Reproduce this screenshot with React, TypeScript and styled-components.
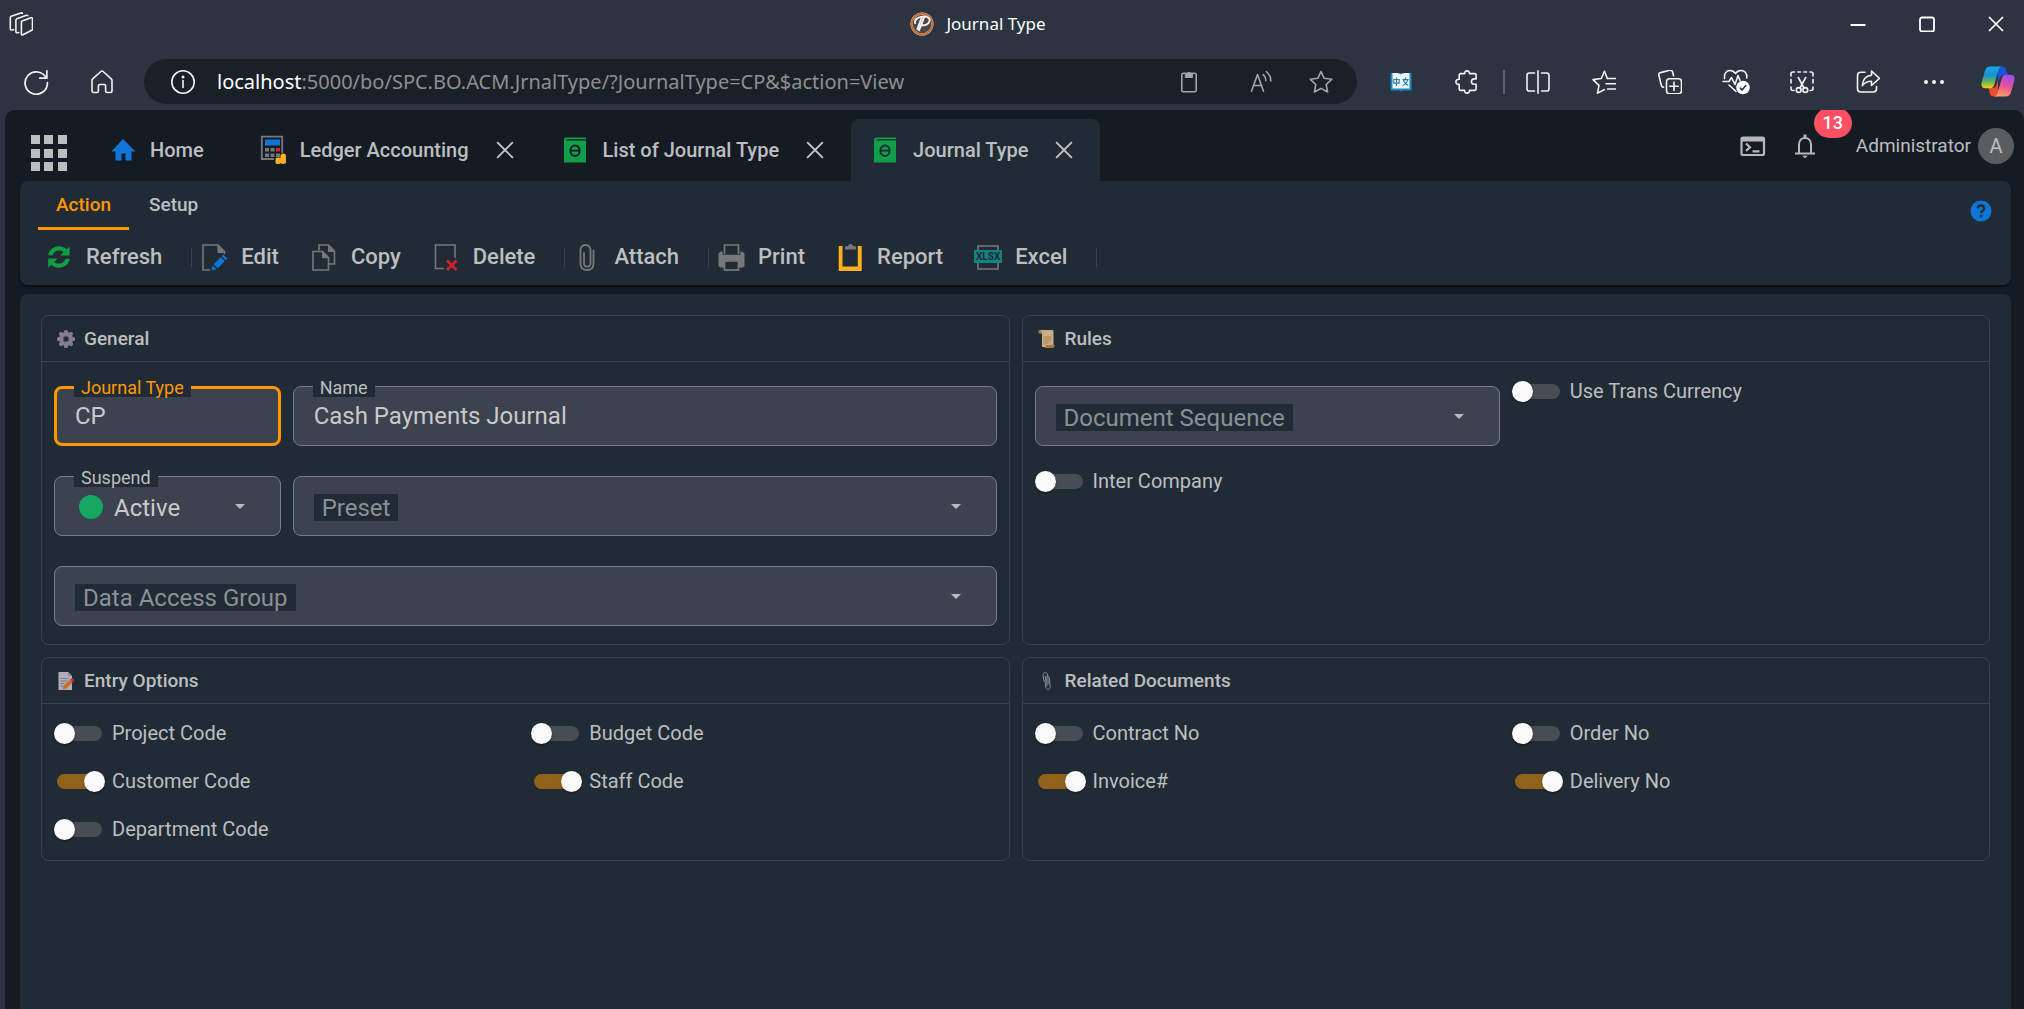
import React, { useState } from "react";
import styled, { createGlobalStyle, css } from "styled-components";

const color = {
  chrome: "#2b3440",
  pill: "#1a2027",
  app: "#151b22",
  surface: "#212b35",
  line: "#3a434c",
  field: "#3c424e",
  fieldLine: "#777d86",
  text: "#bcbec1",
  muted: "#8b9097",
  accent: "#ff9800",
  green: "#119e49",
  blue: "#0f76d8",
  grey: "#77787a",
};

const Global = createGlobalStyle`
  * { box-sizing: border-box; }
  body { margin: 0; background: ${color.chrome}; font-family: Roboto, "Noto Sans", sans-serif; color: ${color.text}; }
  button, input, select { font-family: inherit; color: inherit; margin: 0; }
  svg { display: block; flex: none; }
`;

const Window = styled.div`
  display: flex;
  flex-direction: column;
  min-height: 100vh;
  background: ${color.chrome};
`;

/* Browser frame */

const PlainButton = styled.button`
  display: flex;
  align-items: center;
  justify-content: center;
  padding: 0;
  border: 0;
  background: none;
  cursor: pointer;
`;

const TitleBar = styled.header`
  display: flex;
  align-items: center;
  height: 48px;
`;

const Workspaces = styled(PlainButton)`
  width: 126px;
  height: 44px;
  padding-left: 9px;
  justify-content: flex-start;
`;

const PageTitle = styled.div`
  flex: 1;
  display: flex;
  align-items: center;
  justify-content: center;
  gap: 12px;
  font: 17px/24px "Noto Sans", "Open Sans", sans-serif;
  color: #fff;
`;

const WindowControls = styled.div`
  display: flex;
  gap: 13px;
`;

const WindowButton = styled(PlainButton)`
  width: 56px;
  height: 48px;
`;

const NavBar = styled.nav`
  display: flex;
  align-items: center;
  height: 62px;
  padding: 5px 0 0 3px;
`;

const NavButton = styled(PlainButton)`
  width: 66px;
  height: 44px;
`;

const CopilotButton = styled(PlainButton)`
  width: 57px;
  height: 44px;
  padding-right: 9px;
  justify-content: flex-end;
`;

const NavDivider = styled.span`
  width: 2px;
  height: 24px;
  margin: 0 0 0 3px;
  background: #5b636e;
`;

const AddressBar = styled.div`
  flex: 1;
  display: flex;
  align-items: center;
  height: 45px;
  margin: 0 11px 0 9px;
  padding: 0 6px 0 27px;
  border-radius: 23px;
  background: ${color.pill};
`;

const Address = styled.div`
  flex: 1;
  padding-left: 22px;
  font: 20px/28px "Noto Sans", "Open Sans", sans-serif;
  color: #8e9091;
  white-space: nowrap;
  b { font-weight: 400; color: #fff; }
`;

const AddressButton = styled(PlainButton)<{ $spaced?: boolean }>`
  width: 60px;
  height: 44px;
  margin-right: ${(p) => (p.$spaced ? 12 : 0)}px;
`;

/* Application shell */

const AppFrame = styled.div`
  flex: 1;
  display: flex;
  flex-direction: column;
  margin-left: 5px;
  border-radius: 10px 10px 0 0;
  background: ${color.app};
  overflow: hidden;
`;

const AppHeader = styled.div`
  display: flex;
  align-items: flex-end;
  height: 71px;
  padding: 0 10px 0 15px;
`;

const AppLauncher = styled(PlainButton)`
  width: 58px;
  height: 56px;
  margin-right: 10px;
`;

const Tab = styled.div<{ $active?: boolean; $home?: boolean }>`
  display: flex;
  align-items: center;
  height: 62px;
  padding: 0 ${(p) => (p.$home ? 34 : 27)}px 0 22px;
  border-radius: 8px 8px 0 0;
  background: ${(p) => (p.$active ? color.surface : "transparent")};
`;

const TabLink = styled.a`
  display: flex;
  align-items: center;
  gap: 14px;
  font-size: 20px;
  line-height: 24px;
  font-weight: 500;
  color: ${color.text};
  text-decoration: none;
  white-space: nowrap;
`;

const TabClose = styled(PlainButton)`
  width: 18px;
  height: 24px;
  margin-left: 27px;
`;

const HeaderTools = styled.div`
  display: flex;
  align-items: center;
  align-self: center;
  margin-left: auto;
`;

const ToolButton = styled(PlainButton)`
  position: relative;
  width: 52px;
  height: 36px;
`;

const Badge = styled.span`
  position: absolute;
  left: 35px;
  top: -20px;
  width: 38px;
  height: 30px;
  border-radius: 15px;
  background: #fb4f63;
  color: #fff;
  font-size: 18px;
  line-height: 29px;
  font-weight: 500;
  text-align: center;
`;

const UserName = styled.span`
  margin: 0 7px 0 25px;
  font-size: 19px;
  line-height: 24px;
`;

const Avatar = styled.span`
  width: 36px;
  height: 36px;
  border-radius: 50%;
  background: #5a5d60;
  font-size: 20px;
  line-height: 36px;
  text-align: center;
`;

const Ribbon = styled.div`
  height: 104px;
  margin: 0 13px 9px 15px;
  border-radius: 8px;
  background: ${color.surface};
  box-shadow: 0 2px 2px #0b0f13;
`;

const RibbonTabs = styled.div`
  display: flex;
  align-items: flex-start;
  gap: 2px;
  height: 49px;
  padding: 0 19px 0 18px;
`;

const RibbonTab = styled.button<{ $active?: boolean }>`
  height: 49px;
  padding: 2px 18px 0;
  border: 0;
  border-bottom: 3px solid ${(p) => (p.$active ? color.accent : "transparent")};
  background: none;
  font-size: 19px;
  line-height: 44px;
  font-weight: 500;
  color: ${(p) => (p.$active ? color.accent : color.text)};
`;

const HelpButton = styled(PlainButton)`
  margin-left: auto;
  width: 22px;
  height: 60px;
`;

const Toolbar = styled.div`
  display: flex;
  align-items: center;
  height: 54px;
  padding-left: 17px;
`;

const ToolbarButton = styled(PlainButton)`
  height: 42px;
  padding: 0 23px 0 7px;
  gap: 12px;
  font-size: 22px;
  line-height: 24px;
  font-weight: 500;
`;

const ToolbarIcon = styled.span`
  display: flex;
  justify-content: center;
  width: 30px;
`;

const ToolbarDivider = styled.span`
  width: 1px;
  height: 19px;
  margin-left: 6px;
  background: ${color.line};
`;

/* Form */

const Page = styled.main`
  flex: 1;
  margin: 0 13px 0 15px;
  padding: 21px;
  border-radius: 8px 8px 0 0;
  background: ${color.surface};
`;

const Cards = styled.div`
  display: grid;
  grid-template-columns: 1fr 1fr;
  gap: 12px;
`;

const Card = styled.section`
  border: 1px solid ${color.line};
  border-radius: 8px;
`;

const CardTitle = styled.h2`
  display: flex;
  align-items: center;
  gap: 9px;
  height: 46px;
  margin: 0;
  padding: 0 15px;
  border-bottom: 1px solid ${color.line};
  font-size: 19px;
  line-height: 24px;
  font-weight: 500;
`;

const Grid = styled.div<{ $columns: number }>`
  display: grid;
  grid-template-columns: repeat(${(p) => p.$columns}, 1fr);
  align-items: start;
  gap: 12px;
  padding: 12px;
`;

const Cell = styled.div<{ $span?: number; $tall?: boolean }>`
  grid-column: span ${(p) => p.$span ?? 1};
  min-height: ${(p) => (p.$tall ? 78 : 36)}px;
`;

const FieldBox = styled.div`
  position: relative;
  height: 60px;
  margin: 12px 0 6px;
`;

const control = css<{ $focused?: boolean }>`
  width: 100%;
  height: 60px;
  border: ${(p) => (p.$focused ? `3px solid ${color.accent}` : `1px solid ${color.fieldLine}`)};
  border-radius: 8px;
  outline: none;
  background: ${color.field};
  font-size: 24px;
  line-height: 30px;
  color: #c8cacd;
`;

const TextInput = styled.input<{ $focused?: boolean }>`
  ${control}
  padding: 0 ${(p) => (p.$focused ? 18 : 20)}px;
`;

const SelectInput = styled.select<{ $dot?: boolean }>`
  ${control}
  appearance: none;
  padding: 3px 60px 0 ${(p) => (p.$dot ? 59 : 20)}px;
`;

const FloatLabel = styled.label<{ $focused?: boolean }>`
  position: absolute;
  left: 20px;
  top: -7px;
  padding: 0 7px;
  background: ${color.surface};
  font-size: 18px;
  line-height: 18px;
  color: ${(p) => (p.$focused ? color.accent : color.text)};
`;

const InnerLabel = styled.label`
  position: absolute;
  left: 21px;
  top: 18px;
  padding: 1px 8px 0;
  background: ${color.surface};
  font-size: 24px;
  line-height: 26px;
  color: ${color.muted};
`;

const StatusDot = styled.span`
  position: absolute;
  left: 25px;
  top: 19px;
  width: 24px;
  height: 24px;
  border-radius: 50%;
  background: #16a862;
`;

const Caret = styled.span`
  position: absolute;
  right: 36px;
  top: 28px;
  border: 5px solid transparent;
  border-top-color: #b9bbbe;
  border-bottom: 0;
  pointer-events: none;
`;

const ToggleLabel = styled.label`
  display: flex;
  align-items: center;
  gap: 7px;
  height: 35px;
  font-size: 20px;
  line-height: 23px;
`;

const ToggleInput = styled.input`
  appearance: none;
  position: relative;
  width: 51px;
  height: 21px;
  &::before {
    content: "";
    position: absolute;
    left: 3px;
    top: 3px;
    width: 45px;
    height: 15px;
    border-radius: 8px;
    background: #484c53;
  }
  &::after {
    content: "";
    position: absolute;
    left: 0;
    top: 0;
    width: 21px;
    height: 21px;
    border-radius: 50%;
    background: #fafafa;
    box-shadow: 0 1px 2px rgba(0, 0, 0, 0.5);
  }
  &:checked::before { background: #91621a; }
  &:checked::after { left: 30px; }
`;

/* Icons: browser */

type LineProps = { size?: number; stroke?: string; children: React.ReactNode };
const Line = ({ size = 24, stroke = "#f2f3f4", children }: LineProps) => (
  <svg width={size} height={size} viewBox="0 0 24 24" fill="none" stroke={stroke} strokeWidth="1.6" strokeLinecap="round" strokeLinejoin="round">
    {children}
  </svg>
);

const WorkspacesIcon = () => (
  <Line>
    <path d="M13 9l9-3.300c.8-.3 1.500.2 1.500 1v10.300c0 .6-.3 1-.8 1.300L14 22.800c-.8.500-1.600 0-1.600-.900V10.300c0-.6.2-1.100.6-1.300z" />
    <path d="M9.800 20.500l-1.500.3c-.8.100-1.400-.3-1.400-1V8.300c0-.7.300-1.200.9-1.500l9.700-3.500c.6-.2 1.100 0 1.300.4" />
    <path d="M4.600 17.800l-2 .2c-.8 0-1.300-.4-1.300-1.100V5.700c0-.7.300-1.200.9-1.500L12 .9c.6-.2 1.100 0 1.300.5" />
  </Line>
);

const LogoIcon = () => (
  <svg width="24" height="24" viewBox="0 0 24 24">
    <circle cx="12" cy="12" r="11.500" fill="#e8dccf" />
    <circle cx="12" cy="12" r="10.400" fill="none" stroke="#c9692b" strokeWidth="1.800" />
    <circle cx="12" cy="12" r="9.300" fill="#4a4846" />
    <path d="M5.200 11.200C3.900 7.200 9 4.600 13.500 4.400c4.300-.1 6.800 2 6 4.900-.8 3.100-4.800 4.600-8 3.700M14.200 5.200L9 18.300M11.600 5.800L7.400 17.200" fill="none" stroke="#f3f2f0" strokeWidth="1.900" strokeLinecap="round" />
  </svg>
);

const ReloadIcon = () => (
  <Line size={26}>
    <path d="M21.500 8.500A10.300 10.300 0 1 0 22.500 12.500" />
    <path d="M22 1.800V8.500h-6.500" />
  </Line>
);

const HouseIcon = () => (
  <Line>
    <path d="M2 10.300c0-.6.2-1.100.700-1.500l8.200-7.300c.7-.6 1.500-.6 2.200 0l8.200 7.300c.5.400.7.900.7 1.500v10.500c0 1-.7 1.700-1.700 1.700h-3.100c-.9 0-1.600-.7-1.600-1.600v-5c0-.8-.6-1.400-1.400-1.400h-4.400c-.8 0-1.400.6-1.400 1.400v5c0 .9-.7 1.600-1.600 1.600H3.700c-1 0-1.700-.7-1.700-1.700z" />
  </Line>
);

const InfoIcon = () => (
  <Line>
    <circle cx="12" cy="12" r="11.200" />
    <path d="M12 10.500v7" />
    <circle cx="12" cy="6.900" r=".7" fill="#fff" />
  </Line>
);

const ClipIcon = () => (
  <Line stroke="#a3a6a9">
    <rect x="4.800" y="3.200" width="14.400" height="18.500" rx="1.500" />
    <path d="M8.700 3.500h1.800a1.600 1.600 0 0 1 3.100 0h1.800v4H8.700z" fill="#a3a6a9" strokeWidth="1" />
  </Line>
);

const ReadAloudIcon = () => (
  <Line stroke="#a3a6a9">
    <path d="M2.500 21.300L8.500 4.500l6 16.800M4.700 15.500h7.700" />
    <path d="M14.300 4.600c1.600 1.500 2.500 3.500 2.500 6M17.300 1.500c2.800 2.400 4.500 5.500 4.500 9.500" />
  </Line>
);

const StarIcon = () => (
  <Line stroke="#a3a6a9">
    <path d="M12 1.500l3.200 6.800 7.500 1-5.500 5.200 1.400 7.500-6.600-3.600L5.400 22l1.400-7.500L1.300 9.300l7.500-1z" />
  </Line>
);

const DictionaryIcon = () => (
  <svg width="22" height="20" viewBox="0 0 22 20">
    <path d="M.5 1h21v17.500h-9l-1.500 1-1.500-1h-9z" fill="#1489bf" />
    <path d="M2.500 1c3 0 6.500-.3 8.500 1.500C13 .7 16.500 1 19.500 1v15.500H2.500z" fill="#eef5f8" />
    <path d="M3.800 7.500h5.400v3.600H3.800zM6.500 5.500v8.500M12.300 7.600h6.400M15.500 5.500v2M13.300 7.800c1 3 2.700 4.800 5 5.700M17.700 7.800c-.8 3-2.600 4.800-5 5.700" fill="none" stroke="#2f7ea6" strokeWidth="1.100" />
  </svg>
);

const PuzzleIcon = () => (
  <Line>
    <path d="M9.700 3.600C9.500 1.800 10.500.9 12 .9s2.600.9 2.400 2.700h5.200c.9 0 1.500.6 1.500 1.500v3.800h-1.700c-1.800 0-3 1.200-3 2.700s1.200 2.700 3 2.700h1.700v4.600c0 .9-.6 1.500-1.500 1.500h-5.100c.1 1.800-.9 2.700-2.500 2.700s-2.500-.9-2.400-2.700H5.700c-.9 0-1.500-.6-1.500-1.500v-4.600C2.200 14.500.9 13.500.9 11.800s1.300-2.700 3.300-2.500V5.100c0-.9.600-1.500 1.500-1.500z" />
  </Line>
);

const SplitIcon = () => (
  <Line>
    <path d="M12 .8v22.400" />
    <path d="M8.500 3H3.300C2 3 1 4 1 5.300v13.400C1 20 2 21 3.300 21h5.200M15.500 3h5.200C22 3 23 4 23 5.300v13.400c0 1.300-1 2.300-2.300 2.300h-5.200" />
  </Line>
);

const FavoritesIcon = () => (
  <Line>
    <path d="M15.300 8.500L12.500 1.300 9.300 8.500 1 9.600l6 5.700-1.500 7.800 6.800-3.400" />
    <path d="M15.500 8.500h8M14 13.700h9.500M15.500 19h8" />
  </Line>
);

const CollectionsIcon = () => (
  <Line>
    <rect x="8.500" y="8.700" width="15" height="15" rx="3" />
    <path d="M16 12v8.500M11.700 16.200h8.600" />
    <path d="M5.600 17.200c-1.300 0-2-.7-2.300-2L.9 5.500C.5 4.100 1.200 3 2.500 2.600L11.700.3c1.400-.3 2.500.4 2.900 1.700l.9 3.700" />
  </Line>
);

const HealthIcon = () => (
  <svg width="28" height="26" viewBox="-1 0 28 26" fill="none" stroke="#f2f3f4" strokeWidth="1.600" strokeLinecap="round" strokeLinejoin="round">
    <path d="M1.500 9.500C.5 4.500 3.800 1.500 7 1.500c2.300 0 4 1 5.500 3 1.500-2 3.200-3 5.500-3 3.500 0 6.500 3 5.800 7.500M0 12.500h6l2.500-4 3.500 7 3-9 2 5M6 16l7 6.500" />
    <circle cx="20" cy="18.500" r="6.800" fill="#fff" stroke="none" />
    <path d="M17.300 19l1.800 1.900 3.700-4.300" stroke={color.chrome} />
  </svg>
);

const ScreenshotIcon = () => (
  <Line>
    <path d="M4 20.500H3c-1.200 0-2-.8-2-2v-1.500M1 13V9.500M1 6V4c0-1.200.8-2 2-2h1.500M8 2h2.500M14 2h2.500M20 2h1c1.200 0 2 .8 2 2v2M23 9.500V13M23 17v1.500c0 1.200-.8 2-2 2h-1" />
    <path d="M8.300 7.500l5.700 10.500M15.700 7.500L10 18" />
    <circle cx="8.700" cy="20" r="2.400" />
    <circle cx="15.300" cy="20" r="2.400" />
  </Line>
);

const ShareIcon = () => (
  <Line>
    <path d="M9 2.200H4.700C2.900 2.200 1.500 3.600 1.500 5.400v13.400c0 1.800 1.400 3.200 3.200 3.200h12.600c1.800 0 3.200-1.400 3.200-3.200v-2.300" />
    <path d="M15.500 1l8 7.300-8 7.200v-4.200c-4 0-6.800 1.200-9.200 4.400.4-6 3.700-9.900 9.200-10.500z" />
  </Line>
);

const MoreIcon = () => (
  <svg width="22" height="6" viewBox="0 0 22 6" fill="#f2f3f4">
    <circle cx="3" cy="3" r="2" />
    <circle cx="11" cy="3" r="2" />
    <circle cx="19" cy="3" r="2" />
  </svg>
);

const CopilotIcon = () => (
  <svg width="34" height="31" viewBox="0 0 34 31">
    <defs>
      <linearGradient id="cpA" x1="0" y1="0" x2="0" y2="1">
        <stop offset="0" stopColor="#16a9ee" />
        <stop offset=".4" stopColor="#1b8fd0" />
        <stop offset=".68" stopColor="#5bb55d" />
        <stop offset="1" stopColor="#f7cf12" />
      </linearGradient>
      <linearGradient id="cpB" x1=".6" y1="0" x2=".3" y2="1">
        <stop offset="0" stopColor="#9b4df0" />
        <stop offset=".5" stopColor="#e8529a" />
        <stop offset="1" stopColor="#ffa35a" />
      </linearGradient>
    </defs>
    <path d="M17 .5h4.500c2 0 3 1 3.600 2.900l1.700 5.600h-4c-2 0-3.200.9-3.800 2.900L17 17z" fill="#1a54d4" />
    <path d="M17 30.500h-4.500c-2 0-3-1-3.600-2.900L7.500 22h4c2 0 3.200-.9 3.800-2.900L17 14z" fill="#ee4a2c" />
    <path d="M9.200.5h12c-2 0-3 1.200-3.600 3.200l-4.400 15c-.7 2.400-2 3.500-4.400 3.500H4.300C1 22.200-.3 19.800.7 16.300L4 4.700C4.900 1.800 6.500.5 9.200.5z" fill="url(#cpA)" />
    <path d="M24.800 30.500h-12c2 0 3-1.200 3.600-3.200l4.400-15c.7-2.400 2-3.500 4.400-3.500h4.500c3.300 0 4.600 2.400 3.600 5.900L30 26.300c-.9 2.900-2.500 4.200-5.200 4.200z" fill="url(#cpB)" />
  </svg>
);

const MinimizeIcon = () => (
  <svg width="16" height="16" viewBox="0 0 16 16"><path d="M.5 9h15" stroke="#fff" strokeWidth="2" /></svg>
);
const MaximizeIcon = () => (
  <svg width="16" height="16" viewBox="0 0 16 16"><rect x="1" y="1.500" width="14" height="14" rx="2" fill="none" stroke="#fff" strokeWidth="1.800" /></svg>
);
const CrossIcon = ({ size = 16, stroke = "#fff" }: { size?: number; stroke?: string }) => (
  <svg width={size} height={size} viewBox="0 0 16 16"><path d="M1 1l14 14M15 1L1 15" stroke={stroke} strokeWidth="1.700" /></svg>
);

/* Icons: application */

const LauncherIcon = () => (
  <svg width="36" height="36" viewBox="0 0 36 36" fill="#bcbdbf">
    {[0, 14, 27].map((y) => [0, 13, 27].map((x) => <rect key={`${x}-${y}`} x={x} y={y} width="9" height="9" />))}
  </svg>
);

const HomeTabIcon = () => (
  <svg width="26" height="26" viewBox="0 0 26 26">
    <path d="M13 2L25.500 14.500h-4v9h-6v-7h-4v7h-6v-9h-4z" fill={color.blue} />
  </svg>
);

const LedgerIcon = () => (
  <svg width="26" height="30" viewBox="0 0 26 30">
    <path d="M14 24H1.800V1.700h20.400V18" fill="none" stroke={color.grey} strokeWidth="1.800" />
    <rect x="5" y="4.500" width="15" height="6" fill={color.blue} />
    <g fill={color.grey}>
      <rect x="5" y="13" width="4" height="3.500" /><rect x="10.500" y="13" width="4" height="3.500" />
      <rect x="5" y="18.500" width="4" height="3.500" /><rect x="10.500" y="18.500" width="4" height="3.500" /><rect x="16" y="18.500" width="4" height="3.500" />
    </g>
    <rect x="16" y="13" width="4" height="3.500" fill="#d9242c" />
    <path d="M15.500 24.500c0-1.500 1-2 2.500-2s2.500.5 2.500 1v-2.500c0-1.500 1-2.500 2.700-2.500s2.800 1 2.800 2.500v6c0 1.300-1 2-2.800 2-1.200 0-2-.3-2.500-.9-.4.700-1.300 1-2.600 1-1.700 0-2.600-.6-2.600-1.600z" fill="#fcb01b" />
  </svg>
);

const BookIcon = ({ hole }: { hole: string }) => (
  <svg width="26" height="26" viewBox="1 0 26 26">
    <path d="M3.500.5H24v25H2V2z" fill={color.green} />
    <path d="M4.500 2.800H24" stroke={hole} strokeWidth="1.300" />
    <ellipse cx="13" cy="13.700" rx="4.600" ry="5.300" fill="none" stroke={hole} strokeWidth="2" />
    <path d="M8.500 13.700h9" stroke={hole} strokeWidth="1.800" />
  </svg>
);

const ConsoleIcon = () => (
  <svg width="26" height="20" viewBox="0 0 26 20" fill="none" stroke="#b6b8ba">
    <rect x="1.500" y="1.500" width="22.500" height="17.500" rx="1.500" strokeWidth="2.200" />
    <path d="M1.500 3.500H24" strokeWidth="4" />
    <path d="M6 7.500l4 3.700-4 3.700M12.500 15.300h7" strokeWidth="2.200" />
  </svg>
);

const BellIcon = () => (
  <svg width="20" height="24" viewBox="0 0 20 24" fill="none" stroke="#b6b8ba">
    <path d="M4 19V10.500C4 6.500 6.500 4 10 4s6 2.500 6 6.500V19" strokeWidth="2" />
    <path d="M0 19.500h20" strokeWidth="1.800" />
    <path d="M10 .5v3" strokeWidth="3" />
    <path d="M7.800 22h4.400L10 24z" fill="#b6b8ba" strokeWidth=".6" />
  </svg>
);

const HelpIcon = () => (
  <svg width="22" height="22" viewBox="0 0 22 22">
    <circle cx="11" cy="11" r="10.500" fill={color.blue} />
    <path d="M7.800 8.500C7.800 6.600 9.100 5.500 11 5.500s3.200 1 3.200 2.800c0 1.500-.9 2-1.800 2.700-.9.700-1.200 1.100-1.200 2.200" fill="none" stroke={color.surface} strokeWidth="2.300" />
    <circle cx="11.200" cy="16" r="1.500" fill={color.surface} />
  </svg>
);

const RefreshIcon = () => (
  <svg width="24" height="24" viewBox="0 0 24 24" fill={color.green}>
    <path d="M1.200 10.200C2.200 4.800 6.500 1.300 12 1.300c3 0 5.600 1 7.600 2.900l3-2.800v9h-9.200l3.300-3.300C15.400 5.900 13.900 5.400 12 5.400c-3.200 0-5.600 1.900-6.400 4.800z" />
    <path d="M22.800 13.800c-1 5.400-5.300 8.900-10.800 8.900-3 0-5.600-1-7.600-2.900l-3.200 3V13.600h9.400L7.300 16.900c1.300 1.200 2.800 1.700 4.700 1.700 3.200 0 5.600-1.900 6.400-4.800z" />
  </svg>
);

const EditIcon = () => (
  <svg width="25" height="27" viewBox="0 0 25 27">
    <path d="M8 26H1V1h15l6.500 6.500V10" fill="none" stroke={color.grey} strokeWidth="1.600" />
    <path d="M15.500 1v8H23z" fill={color.grey} />
    <path d="M9.500 26.500l1-5 3.800 3.800zM11.700 20.200l7-7 4 4-7 7zM19.700 12.200l1.600-1.600 4 4-1.600 1.600z" fill={color.blue} />
  </svg>
);

const CopyIcon = () => (
  <svg width="24" height="27" viewBox="0 0 24 27">
    <g fill="none" stroke={color.grey} strokeWidth="1.600">
      <path d="M7 6.500V1h9.500l6 6V20h-5.500" />
      <path d="M1 7.500h9.500l6 6V26H1z" />
    </g>
    <path d="M16 1v7h7zM10 7.500v6.800h7z" fill={color.grey} />
  </svg>
);

const DeleteIcon = () => (
  <svg width="24" height="27" viewBox="0 0 24 27" fill="none">
    <path d="M10 24.500H1.500V1H21v13" stroke={color.grey} strokeWidth="1.600" />
    <path d="M13 16.500l9.500 9.500M22.500 16.500L13 26" stroke="#d5222a" strokeWidth="2.600" />
  </svg>
);

const AttachIcon = () => (
  <svg width="16" height="27" viewBox="0 0 16 27" fill="none" stroke={color.grey} strokeWidth="1.800" strokeLinecap="round">
    <path d="M11.500 7v12c0 2.500-1.300 3.700-3.300 3.700S5 21.500 5 19V9M11.500 19V6.500C11.500 3 9.500 1 6.500 1S1.500 3 1.500 6.500v12.700C1.500 23.500 4 26 8 26s6.500-2.500 6.500-6.800V6.500" />
  </svg>
);

const PrintIcon = () => (
  <svg width="27" height="27" viewBox="0 0 27 27">
    <path d="M6.500 10V1h14v9" fill="none" stroke={color.grey} strokeWidth="1.700" />
    <path d="M.5 9.500l2-2h2v3.300h18V7.500h2l2 2V22l-1.500 1.500h-4V16.500H6.500v7h-4L.5 22z" fill={color.grey} />
    <rect x="6.500" y="17" width="14" height="9" fill={color.surface} stroke={color.grey} strokeWidth="1.700" />
  </svg>
);

const ReportIcon = () => (
  <svg width="24" height="27" viewBox="0 0 24 27">
    <path d="M4.500 2H.7v25h23V2h-3.900v20.500H4.500z" fill="#fcb01b" />
    <path d="M7 5.500V2.500l3-.5L11 .3h3l1 1.700 3 .5v3z" fill={color.grey} />
  </svg>
);

const ExcelBox = styled.span`
  position: relative;
  display: flex;
  justify-content: center;
`;

const ExcelTag = styled.span`
  position: absolute;
  top: 5px;
  width: 28px;
  height: 13px;
  background: #0f8482;
  color: ${color.surface};
  font-size: 10px;
  line-height: 13px;
  font-weight: 800;
  text-align: center;
`;

const ExcelIcon = () => (
  <ExcelBox>
    <svg width="28" height="25" viewBox="0 0 28 25" fill="none" stroke={color.grey} strokeWidth="1.600">
      <path d="M4 5V1h20v4M4 18v6h20v-6" />
    </svg>
    <ExcelTag>XLSX</ExcelTag>
  </ExcelBox>
);

const GearIcon = () => (
  <svg width="18" height="18" viewBox="0 0 18 18">
    <g fill="#867d8e">
      {[0, 45, 90, 135].map((a) => (
        <rect key={a} x="7" y="0" width="4" height="18" rx="1.500" transform={`rotate(${a} 9 9)`} />
      ))}
      <circle cx="9" cy="9" r="7" />
    </g>
    <circle cx="9" cy="9" r="2.900" fill={color.surface} stroke="#635b6b" strokeWidth="1" />
  </svg>
);

const ScrollIcon = () => (
  <svg width="18" height="18" viewBox="0 0 18 18">
    <path d="M1.500 0H14c1 0 1.500.600 1.500 1.500V17H4V3.500H2.500C1.300 3.500.5 2.700.5 1.700z" fill="#c5ae85" />
    <path d="M.5 1.700C.5.700 1 .3 1.700.3S3.500.9 3.500 1.800V3H1.800C1 3 .5 2.500.5 1.700zM8 15h8.500c.3 1.800-.5 3-2 3H6c1.400-.2 2.200-1.300 2-3z" fill="#a8763d" />
    <path d="M5.500 7h8M5.500 9h8M5.500 11h7M5.500 13h5" stroke="#b07f51" />
  </svg>
);

const MemoIcon = () => (
  <svg width="18" height="18" viewBox="0 0 18 18">
    <path d="M1.500 0h9.500l4 4v14H1.500z" fill="#b1adbb" />
    <path d="M11 0v4h4z" fill="#8b8796" />
    <path d="M3.500 6.500h8M3.500 9h7M3.500 11.500h4M3.500 14h2.500" stroke="#7d7989" />
    <path d="M5.500 17.500l.8-3.500 6.700-6.500 2.800 2.800L9 16.800z" fill="#c9702c" />
    <path d="M13 7.500l1.500-1.200c1.500-.6 3.200 1 2.600 2.600l-1.300 1.400z" fill="#c2274f" />
  </svg>
);

const ClipsIcon = () => (
  <svg width="18" height="18" viewBox="0 0 18 18" fill="none" stroke="#8d8a93" strokeWidth="1" strokeLinecap="round">
    <path d="M6 9L5 3.500C4.900 1.500 6 .7 7.300.7S9.600 1.500 9.700 3l.5 9M7.800 8L7 4" />
    <path d="M7 8.500l.8 6.500c.2 1.700 1.300 2.500 2.600 2.300s2-1.200 1.800-2.700L11.300 6c-.2-1.300-.9-1.900-1.900-1.800s-1.500.9-1.300 2l1 7.600" />
  </svg>
);

/* Form parts */

type TextFieldProps = { id: string; label: string; value: string; focused?: boolean };
const TextField = ({ id, label, value, focused }: TextFieldProps) => (
  <FieldBox>
    <TextInput id={id} defaultValue={value} $focused={focused} />
    <FloatLabel htmlFor={id} $focused={focused}>{label}</FloatLabel>
  </FieldBox>
);

const EmptySelect = ({ id, label }: { id: string; label: string }) => (
  <FieldBox>
    <SelectInput id={id} defaultValue=""><option value="" /></SelectInput>
    <InnerLabel htmlFor={id}>{label}</InnerLabel>
    <Caret />
  </FieldBox>
);

const Toggle = ({ label, on = false }: { label: string; on?: boolean }) => {
  const [checked, setChecked] = useState(on);
  return (
    <ToggleLabel>
      <ToggleInput type="checkbox" checked={checked} onChange={(e) => setChecked(e.target.checked)} />
      {label}
    </ToggleLabel>
  );
};

const actions: Array<{ label: string; icon: React.ReactNode; divider?: boolean }> = [
  { label: "Refresh", icon: <RefreshIcon />, divider: true },
  { label: "Edit", icon: <EditIcon /> },
  { label: "Copy", icon: <CopyIcon /> },
  { label: "Delete", icon: <DeleteIcon />, divider: true },
  { label: "Attach", icon: <AttachIcon />, divider: true },
  { label: "Print", icon: <PrintIcon /> },
  { label: "Report", icon: <ReportIcon /> },
  { label: "Excel", icon: <ExcelIcon />, divider: true },
];

const tabs = [
  { label: "Ledger Accounting", icon: <LedgerIcon /> },
  { label: "List of Journal Type", icon: <BookIcon hole={color.app} /> },
  { label: "Journal Type", icon: <BookIcon hole={color.surface} />, active: true },
];

const navTools: Array<[string, React.ReactNode]> = [
  ["Split screen", <SplitIcon />],
  ["Favorites", <FavoritesIcon />],
  ["Collections", <CollectionsIcon />],
  ["Browser essentials", <HealthIcon />],
  ["Screenshot", <ScreenshotIcon />],
  ["Share", <ShareIcon />],
  ["More", <MoreIcon />],
];

export default function App() {
  return (
    <Window>
      <Global />
      <TitleBar>
        <Workspaces aria-label="Workspaces"><WorkspacesIcon /></Workspaces>
        <PageTitle><LogoIcon />Journal Type</PageTitle>
        <WindowControls>
          <WindowButton aria-label="Minimize"><MinimizeIcon /></WindowButton>
          <WindowButton aria-label="Maximize"><MaximizeIcon /></WindowButton>
          <WindowButton aria-label="Close"><CrossIcon /></WindowButton>
        </WindowControls>
      </TitleBar>
      <NavBar>
        <NavButton aria-label="Reload"><ReloadIcon /></NavButton>
        <NavButton aria-label="Home page"><HouseIcon /></NavButton>
        <AddressBar>
          <InfoIcon />
          <Address><b>localhost</b>:5000/bo/SPC.BO.ACM.JrnalType/?JournalType=CP&amp;$action=View</Address>
          <AddressButton aria-label="Paste" $spaced><ClipIcon /></AddressButton>
          <AddressButton aria-label="Read aloud"><ReadAloudIcon /></AddressButton>
          <AddressButton aria-label="Add to favorites"><StarIcon /></AddressButton>
        </AddressBar>
        <NavButton aria-label="Dictionary"><DictionaryIcon /></NavButton>
        <NavButton aria-label="Extensions"><PuzzleIcon /></NavButton>
        <NavDivider />
        {navTools.map(([label, icon]) => (
          <NavButton key={label} aria-label={label}>{icon}</NavButton>
        ))}
        <CopilotButton aria-label="Copilot"><CopilotIcon /></CopilotButton>
      </NavBar>

      <AppFrame>
        <AppHeader>
          <AppLauncher aria-label="Applications"><LauncherIcon /></AppLauncher>
          <Tab $home><TabLink href="#home"><HomeTabIcon />Home</TabLink></Tab>
          {tabs.map((t) => (
            <Tab key={t.label} $active={t.active}>
              <TabLink href="#tab">{t.icon}{t.label}</TabLink>
              <TabClose aria-label={`Close ${t.label}`}><CrossIcon size={18} stroke="#c4c6c8" /></TabClose>
            </Tab>
          ))}
          <HeaderTools>
            <ToolButton aria-label="Console"><ConsoleIcon /></ToolButton>
            <ToolButton aria-label="Notifications"><BellIcon /><Badge>13</Badge></ToolButton>
            <UserName>Administrator</UserName>
            <Avatar>A</Avatar>
          </HeaderTools>
        </AppHeader>

        <Ribbon>
          <RibbonTabs>
            <RibbonTab $active>Action</RibbonTab>
            <RibbonTab>Setup</RibbonTab>
            <HelpButton aria-label="Help"><HelpIcon /></HelpButton>
          </RibbonTabs>
          <Toolbar>
            {actions.map((a) => (
              <React.Fragment key={a.label}>
                <ToolbarButton><ToolbarIcon>{a.icon}</ToolbarIcon>{a.label}</ToolbarButton>
                {a.divider && <ToolbarDivider />}
              </React.Fragment>
            ))}
          </Toolbar>
        </Ribbon>

        <Page>
          <Cards>
            <Card>
              <CardTitle><GearIcon />General</CardTitle>
              <Grid $columns={4}>
                <Cell $tall><TextField id="journal-type" label="Journal Type" value="CP" focused /></Cell>
                <Cell $tall $span={3}><TextField id="name" label="Name" value="Cash Payments Journal" /></Cell>
                <Cell $tall>
                  <FieldBox>
                    <SelectInput id="suspend" $dot defaultValue="Active"><option>Active</option></SelectInput>
                    <FloatLabel htmlFor="suspend">Suspend</FloatLabel>
                    <StatusDot />
                    <Caret />
                  </FieldBox>
                </Cell>
                <Cell $tall $span={3}><EmptySelect id="preset" label="Preset" /></Cell>
                <Cell $tall $span={4}><EmptySelect id="data-access-group" label="Data Access Group" /></Cell>
              </Grid>
            </Card>

            <Card>
              <CardTitle><ScrollIcon />Rules</CardTitle>
              <Grid $columns={2}>
                <Cell $tall><EmptySelect id="document-sequence" label="Document Sequence" /></Cell>
                <Cell $tall><Toggle label="Use Trans Currency" /></Cell>
                <Cell $tall><Toggle label="Inter Company" /></Cell>
              </Grid>
            </Card>

            <Card>
              <CardTitle><MemoIcon />Entry Options</CardTitle>
              <Grid $columns={2}>
                <Cell><Toggle label="Project Code" /></Cell>
                <Cell><Toggle label="Budget Code" /></Cell>
                <Cell><Toggle label="Customer Code" on /></Cell>
                <Cell><Toggle label="Staff Code" on /></Cell>
                <Cell><Toggle label="Department Code" /></Cell>
              </Grid>
            </Card>

            <Card>
              <CardTitle><ClipsIcon />Related Documents</CardTitle>
              <Grid $columns={2}>
                <Cell><Toggle label="Contract No" /></Cell>
                <Cell><Toggle label="Order No" /></Cell>
                <Cell><Toggle label="Invoice#" on /></Cell>
                <Cell><Toggle label="Delivery No" on /></Cell>
              </Grid>
            </Card>
          </Cards>
        </Page>
      </AppFrame>
    </Window>
  );
}
